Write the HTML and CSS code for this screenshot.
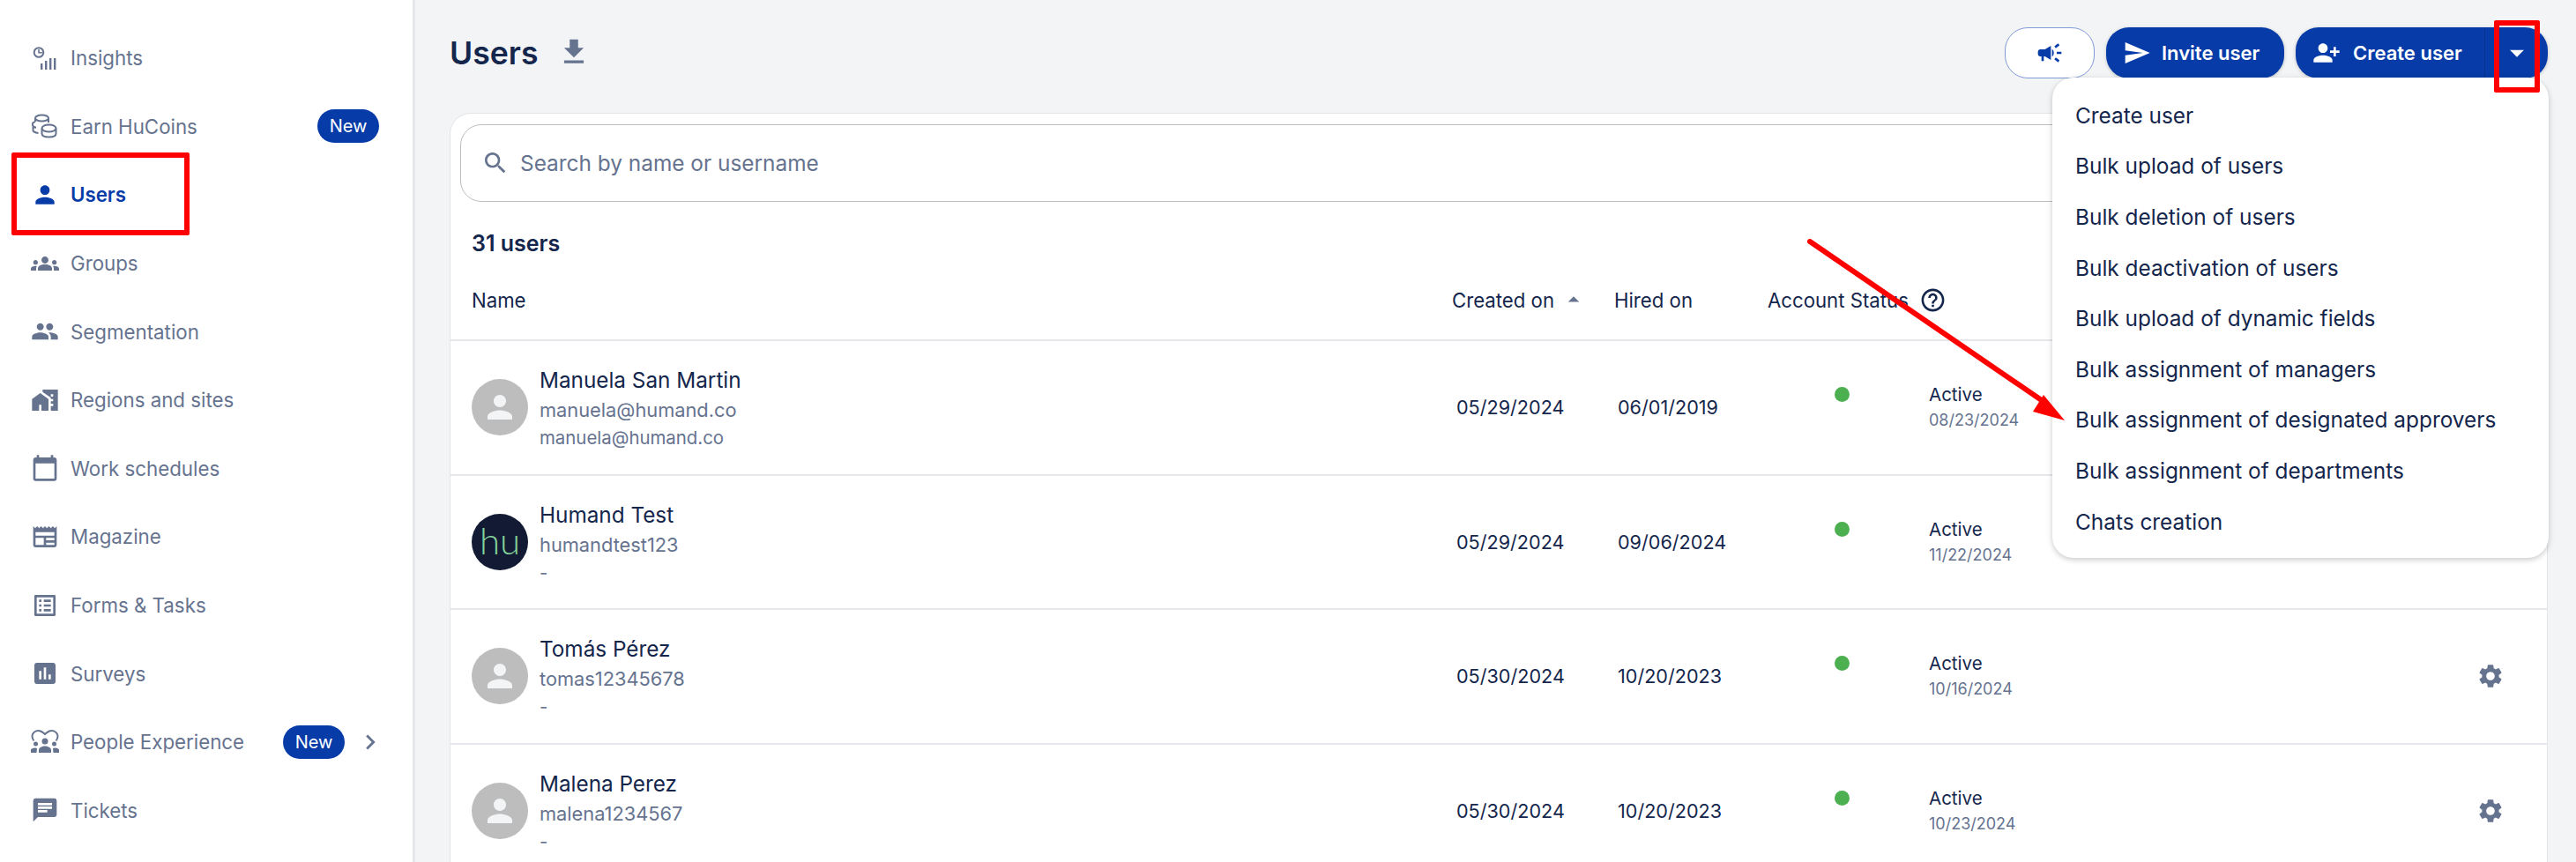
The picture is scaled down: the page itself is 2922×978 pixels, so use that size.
FILE: index.html
```html
<!DOCTYPE html>
<html>
    <head>
        <title>Users</title>
        <link rel="stylesheet" href="styles.css">
    </head>
    <body>
        <svg class="defs" width="0" height="0">
            <symbol id="person" viewBox="0 0 24 24"><path d="M12 12c2.21 0 4-1.79 4-4s-1.79-4-4-4-4 1.79-4 4 1.79 4 4 4zm0 2c-2.67 0-8 1.34-8 4v2h16v-2c0-2.66-5.33-4-8-4z"/></symbol>
            <symbol id="gear" viewBox="0 0 24 24"><path d="M19.14 12.94c.04-.3.06-.61.06-.94 0-.32-.02-.64-.07-.94l2.03-1.58c.18-.14.23-.41.12-.61l-1.92-3.32c-.12-.22-.37-.29-.59-.22l-2.39.96c-.5-.38-1.03-.7-1.62-.94l-.36-2.54c-.04-.24-.24-.41-.48-.41h-3.84c-.24 0-.43.17-.47.41l-.36 2.54c-.59.24-1.13.57-1.62.94l-2.39-.96c-.22-.08-.47 0-.59.22L2.74 8.87c-.12.21-.08.47.12.61l2.03 1.58c-.05.3-.09.63-.09.94s.02.64.07.94l-2.03 1.58c-.18.14-.23.41-.12.61l1.92 3.32c.12.22.37.29.59.22l2.39-.96c.5.38 1.03.7 1.62.94l.36 2.54c.05.24.24.41.48.41h3.84c.24 0 .44-.17.47-.41l.36-2.54c.59-.24 1.13-.56 1.62-.94l2.39.96c.22.08.47 0 .59-.22l1.92-3.32c.12-.22.07-.47-.12-.61l-2.01-1.58zM12 15.6c-1.98 0-3.6-1.62-3.6-3.6s1.62-3.6 3.6-3.6 3.6 1.62 3.6 3.6-1.62 3.6-3.6 3.6z"/></symbol>
        </svg>

        <div class="app">
            <aside class="sidebar">
                <a class="navitem">
                    <svg class="icon" viewBox="0 0 32 32"><circle class="line" cx="9" cy="9.5" r="5.3"/><path d="M8.2 6h1.6v3h3v1.6H8.2z"/><rect x="11" y="22" width="2.4" height="7"/><rect x="16" y="19" width="2.4" height="10"/><rect x="21" y="16" width="2.4" height="13"/><rect x="26" y="16" width="2.4" height="13"/></svg>
                    <span>Insights</span>
                </a>
                <a class="navitem">
                    <svg class="icon" viewBox="0 0 32 32"><ellipse class="line" cx="12.5" cy="7" rx="7.5" ry="3.5"/><path class="line" d="M5 7v4M20 7v5M5 11c-2.5.5-3.5 2-3 4 .3 1.5 2 2.5 4 2.8M2.5 17v4c0 1 2 2.5 6 3"/><ellipse class="line" cx="20.5" cy="18.5" rx="8" ry="4"/><path class="line" d="M12.5 18.5v6c0 2.5 3.5 4 8 4s8-1.5 8-4v-6"/></svg>
                    <span>Earn HuCoins</span>
                    <span class="badge">New</span>
                </a>
                <a class="navitem active">
                    <svg class="icon" viewBox="0 0 24 24"><use href="#person"/></svg>
                    <span>Users</span>
                </a>
                <a class="navitem">
                    <svg class="icon" viewBox="0 0 24 24"><path d="M12 12.75c1.63 0 3.07.39 4.24.9 1.08.48 1.76 1.56 1.76 2.73V18H6v-1.61c0-1.18.68-2.26 1.76-2.73 1.17-.52 2.61-.91 4.24-.91zM4 13c1.1 0 2-.9 2-2s-.9-2-2-2-2 .9-2 2 .9 2 2 2zm1.13 1.1c-.37-.06-.74-.1-1.13-.1-.99 0-1.93.21-2.78.58C.48 14.9 0 15.62 0 16.43V18h4.5v-1.61c0-.83.23-1.61.63-2.29zM20 13c1.1 0 2-.9 2-2s-.9-2-2-2-2 .9-2 2 .9 2 2 2zm4 3.43c0-.81-.48-1.53-1.22-1.85-.85-.37-1.79-.58-2.78-.58-.39 0-.76.04-1.13.1.4.68.63 1.46.63 2.29V18H24v-1.57zM12 6c1.66 0 3 1.34 3 3s-1.34 3-3 3-3-1.34-3-3 1.34-3 3-3z"/></svg>
                    <span>Groups</span>
                </a>
                <a class="navitem">
                    <svg class="icon" viewBox="0 0 24 24"><path d="M16 11c1.66 0 2.99-1.34 2.99-3S17.66 5 16 5c-1.66 0-3 1.34-3 3s1.34 3 3 3zm-8 0c1.66 0 2.99-1.34 2.99-3S9.66 5 8 5C6.34 5 5 6.34 5 8s1.34 3 3 3zm0 2c-2.33 0-7 1.17-7 3.5V19h14v-2.5c0-2.33-4.67-3.5-7-3.5zm8 0c-.29 0-.62.02-.97.05 1.16.84 1.97 1.97 1.97 3.45V19h6v-2.5c0-2.33-4.67-3.5-7-3.5z"/></svg>
                    <span>Segmentation</span>
                </a>
                <a class="navitem">
                    <svg class="icon" viewBox="0 0 24 24"><path d="M1 11v10h6v-5h2v5h6V11L8 6z"/><path d="M10 3v1.97l7 5V11h2v2h-2v2h2v2h-2v4h6V3H10zm9 6h-2V7h2v2z"/></svg>
                    <span>Regions and sites</span>
                </a>
                <a class="navitem">
                    <svg class="icon" viewBox="0 0 24 24"><path d="M20 3h-1V1h-2v2H7V1H5v2H4c-1.1 0-2 .9-2 2v16c0 1.1.9 2 2 2h16c1.1 0 2-.9 2-2V5c0-1.1-.9-2-2-2zm0 18H4V8h16v13z"/></svg>
                    <span>Work schedules</span>
                </a>
                <a class="navitem">
                    <svg class="icon" viewBox="0 0 24 24"><path d="M22 3l-1.67 1.67L18.67 3 17 4.67 15.33 3l-1.66 1.67L12 3l-1.67 1.67L8.67 3 7 4.67 5.33 3 3.67 4.67 2 3v16c0 1.1.9 2 2 2h16c1.1 0 2-.9 2-2V3zM11 19H4v-6h7v6zm9 0h-7v-2h7v2zm0-4h-7v-2h7v2zm0-4H4V8h16v3z"/></svg>
                    <span>Magazine</span>
                </a>
                <a class="navitem">
                    <svg class="icon" viewBox="0 0 24 24"><path d="M19 5v14H5V5h14m1.1-2H3.9c-.5 0-.9.4-.9.9v16.2c0 .4.4.9.9.9h16.2c.4 0 .9-.5.9-.9V3.9c0-.5-.5-.9-.9-.9zM11 7h6v2h-6V7zm0 4h6v2h-6v-2zm0 4h6v2h-6zM7 7h2v2H7zm0 4h2v2H7zm0 4h2v2H7z"/></svg>
                    <span>Forms &amp; Tasks</span>
                </a>
                <a class="navitem">
                    <svg class="icon" viewBox="0 0 24 24"><path d="M19 3H5c-1.1 0-2 .9-2 2v14c0 1.1.9 2 2 2h14c1.1 0 2-.9 2-2V5c0-1.1-.9-2-2-2zM9 17H7v-7h2v7zm4 0h-2V7h2v10zm4 0h-2v-4h2v4z"/></svg>
                    <span>Surveys</span>
                </a>
                <a class="navitem">
                    <svg class="icon" viewBox="0 0 32 32"><path class="line" d="M3.5 14.5C1.5 12 1 9.5 2 7c1.5-3.5 6-5 9-3.5 2 1 4 2.5 5 3.5 1-1 3-2.5 5-3.5 3-1.5 7.5 0 9 3.5 1 2.5.5 5-1.5 7.5"/><circle cx="16" cy="15" r="3.5"/><circle cx="5.5" cy="18" r="2.5"/><circle cx="26.5" cy="18" r="2.5"/><path d="M9 28v-3c0-3 4-4.5 7-4.5s7 1.5 7 4.5v3zM0 28v-3c0-1.5 2-2.5 5-2.5l2 .5-.5 5zM32 28v-3c0-1.5-2-2.5-5-2.5l-2 .5.5 5z"/></svg>
                    <span>People Experience</span>
                    <span class="badge">New</span>
                    <svg class="chev" viewBox="0 0 24 24"><path d="M10 6L8.59 7.41 13.17 12l-4.58 4.59L10 18l6-6z"/></svg>
                </a>
                <a class="navitem">
                    <svg class="icon" viewBox="0 0 24 24"><path d="M20 2H4c-1.1 0-2 .9-2 2v18l4-4h14c1.1 0 2-.9 2-2V4c0-1.1-.9-2-2-2zM6 9h12v2H6V9zm8 5H6v-2h8v2zm4-6H6V6h12v2z"/></svg>
                    <span>Tickets</span>
                </a>
            </aside>

            <main class="main">
                <div class="topbar">
                    <h1 class="pagetitle">Users</h1>
                    <svg class="download" viewBox="0 0 24 24"><path d="M19 9h-4V3H9v6H5l7 7 7-7zM5 18v2h14v-2H5z"/></svg>
                    <div class="actions">
                        <button class="btn btn-outline">
                            <svg viewBox="0 0 24 24"><path d="M18 11v2h4v-2h-4zm-2 6.61c.96.71 2.21 1.65 3.2 2.39.4-.53.8-1.07 1.2-1.6-.99-.74-2.24-1.68-3.2-2.4-.4.54-.8 1.08-1.2 1.61zM20.4 5.6c-.4-.53-.8-1.07-1.2-1.6-.99.74-2.24 1.68-3.2 2.4.4.53.8 1.07 1.2 1.6.96-.72 2.21-1.65 3.2-2.4zM4 9c-1.1 0-2 .9-2 2v2c0 1.1.9 2 2 2h1v4h2v-4h1l5 3V6L8 9H4zm11.5 3c0-1.33-.58-2.53-1.5-3.35v6.69c.92-.81 1.5-2.01 1.5-3.34z"/></svg>
                        </button>
                        <button class="btn btn-invite">
                            <svg viewBox="0 0 24 24"><path d="M2.01 21L23 12 2.01 3 2 10l15 2-15 2z"/></svg>
                            Invite user
                        </button>
                        <div class="btn btn-create">
                            <div class="create-main">
                                <svg viewBox="0 0 24 24"><path d="M13 8c0-2.21-1.79-4-4-4S5 5.79 5 8s1.79 4 4 4 4-1.79 4-4zm2 2v2h3v3h2v-3h3v-2h-3V7h-2v3h-3zM1 18v2h16v-2c0-2.66-5.33-4-8-4s-8 1.34-8 4z"/></svg>
                                Create user
                            </div>
                            <div class="create-caret">
                                <svg viewBox="0 0 24 24"><path d="M7 10l5 5 5-5z"/></svg>
                            </div>
                        </div>
                    </div>
                </div>

                <section class="card">
                    <div class="search">
                        <svg viewBox="0 0 24 24"><path d="M15.5 14h-.79l-.28-.27C15.41 12.59 16 11.11 16 9.5 16 5.91 13.09 3 9.5 3S3 5.91 3 9.5 5.91 16 9.5 16c1.61 0 3.09-.59 4.23-1.57l.27.28v.79l5 4.99L20.49 19l-4.99-5zm-6 0C7.01 14 5 11.99 5 9.5S7.01 5 9.5 5 14 7.01 14 9.5 11.99 14 9.5 14z"/></svg>
                        <span>Search by name or username</span>
                    </div>
                    <div class="count">31 users</div>

                    <div class="row head">
                        <div>Name</div>
                        <div class="sortcell">Created on
                            <svg viewBox="0 0 24 24"><path d="M7 14l5-5 5 5z"/></svg>
                        </div>
                        <div>Hired on</div>
                        <div class="statuscell">Account Status
                            <svg viewBox="0 0 24 24"><path d="M11 18h2v-2h-2v2zm1-16C6.48 2 2 6.48 2 12s4.48 10 10 10 10-4.48 10-10S17.52 2 12 2zm0 18c-4.41 0-8-3.59-8-8s3.59-8 8-8 8 3.59 8 8-3.59 8-8 8zm0-14c-2.21 0-4 1.79-4 4h2c0-1.1.9-2 2-2s2 .9 2 2c0 2-3 1.75-3 5h2c0-2.25 3-2.5 3-5 0-2.21-1.79-4-4-4z"/></svg>
                        </div>
                    </div>

                    <div class="row">
                        <div class="user">
                            <div class="avatar"><svg viewBox="0 0 24 24"><use href="#person"/></svg></div>
                            <div class="userinfo">
                                <div class="name">Manuela San Martin</div>
                                <div class="sub">manuela@humand.co</div>
                                <div class="sub small">manuela@humand.co</div>
                            </div>
                        </div>
                        <div class="date created">05/29/2024</div>
                        <div class="date hired">06/01/2019</div>
                        <div class="dotcell"><span class="dot"></span></div>
                        <div class="state"><div class="statename">Active</div><div class="statedate">08/23/2024</div></div>
                        <div class="gearcell"><svg class="gear" viewBox="0 0 24 24"><use href="#gear"/></svg></div>
                    </div>

                    <div class="row">
                        <div class="user">
                            <div class="avatar logo">hu</div>
                            <div class="userinfo">
                                <div class="name">Humand Test</div>
                                <div class="sub">humandtest123</div>
                                <div class="sub small">-</div>
                            </div>
                        </div>
                        <div class="date created">05/29/2024</div>
                        <div class="date hired">09/06/2024</div>
                        <div class="dotcell"><span class="dot"></span></div>
                        <div class="state"><div class="statename">Active</div><div class="statedate">11/22/2024</div></div>
                        <div class="gearcell"><svg class="gear" viewBox="0 0 24 24"><use href="#gear"/></svg></div>
                    </div>

                    <div class="row">
                        <div class="user">
                            <div class="avatar"><svg viewBox="0 0 24 24"><use href="#person"/></svg></div>
                            <div class="userinfo">
                                <div class="name">Tomás Pérez</div>
                                <div class="sub">tomas12345678</div>
                                <div class="sub small">-</div>
                            </div>
                        </div>
                        <div class="date created">05/30/2024</div>
                        <div class="date hired">10/20/2023</div>
                        <div class="dotcell"><span class="dot"></span></div>
                        <div class="state"><div class="statename">Active</div><div class="statedate">10/16/2024</div></div>
                        <div class="gearcell"><svg class="gear" viewBox="0 0 24 24"><use href="#gear"/></svg></div>
                    </div>

                    <div class="row">
                        <div class="user">
                            <div class="avatar"><svg viewBox="0 0 24 24"><use href="#person"/></svg></div>
                            <div class="userinfo">
                                <div class="name">Malena Perez</div>
                                <div class="sub">malena1234567</div>
                                <div class="sub small">-</div>
                            </div>
                        </div>
                        <div class="date created">05/30/2024</div>
                        <div class="date hired">10/20/2023</div>
                        <div class="dotcell"><span class="dot"></span></div>
                        <div class="state"><div class="statename">Active</div><div class="statedate">10/23/2024</div></div>
                        <div class="gearcell"><svg class="gear" viewBox="0 0 24 24"><use href="#gear"/></svg></div>
                    </div>
                </section>
            </main>

            <div class="menu">
                <div class="menuitem">Create user</div>
                <div class="menuitem">Bulk upload of users</div>
                <div class="menuitem">Bulk deletion of users</div>
                <div class="menuitem">Bulk deactivation of users</div>
                <div class="menuitem">Bulk upload of dynamic fields</div>
                <div class="menuitem">Bulk assignment of managers</div>
                <div class="menuitem">Bulk assignment of designated approvers</div>
                <div class="menuitem">Bulk assignment of departments</div>
                <div class="menuitem">Chats creation</div>
            </div>

            <!-- red annotations on top of the screenshot -->
            <div class="mark mark-users"></div>
            <div class="mark mark-caret"></div>
            <svg class="arrow" viewBox="0 0 300 210">
                <line x1="3" y1="3" x2="270" y2="186" stroke="#ff0000" stroke-width="6" stroke-linecap="round"/>
                <polygon points="292,206 268,177 256,196" fill="#ff0000"/>
            </svg>
        </div>
    </body>
</html>
```
FILE: styles.css
```css
*{
    box-sizing: border-box;
}

html, body{
    margin: 0;
    padding: 0;
    height: 978px;
    overflow: hidden;
}

body{
    font-family: "Inter", "Liberation Sans", sans-serif;
    color: #14264c;
    background-color: #f3f4f6;
}

svg{
    fill: currentColor;
    flex-shrink: 0;
}

svg .line{
    fill: none;
    stroke: currentColor;
    stroke-width: 2;
}

.defs{
    position: absolute;
}

.app{
    display: flex;
    height: 978px;
    position: relative;
    overflow: hidden;
}

/* sidebar */
.sidebar{
    width: 471px;
    flex-shrink: 0;
    background-color: #fff;
    border-right: 3px solid #e5e7eb;
    padding: 27px 38px 0 35px;
}

.navitem{
    display: flex;
    align-items: center;
    height: 77.6px;
    color: #66738f;
    font-size: 22.3px;
}

.navitem .icon{
    width: 32px;
    height: 32px;
    margin-right: 13px;
}

.navitem.active{
    color: #063ba8;
    font-weight: 600;
}

.badge{
    margin-left: auto;
    width: 70px;
    height: 38px;
    border-radius: 19px;
    background-color: #063ba8;
    color: #fff;
    font-size: 20px;
    display: flex;
    justify-content: center;
    align-items: center;
}

.chev{
    width: 34px;
    height: 34px;
    margin-left: 12px;
    margin-right: -7px;
}

/* main */
.main{
    flex: 1;
    min-width: 0;
    padding: 31px 32px 0 39px;
}

.topbar{
    display: flex;
    align-items: center;
    height: 58px;
    margin-bottom: 39px;
}

.pagetitle{
    margin: 0;
    font-size: 35.6px;
    font-weight: 600;
}

.download{
    width: 38px;
    height: 38px;
    color: #66738f;
    margin-left: 22px;
    margin-top: -2px;
}

.actions{
    margin-left: auto;
    display: flex;
    gap: 13px;
}

.btn{
    height: 58px;
    border: none;
    border-radius: 26px;
    font-family: inherit;
    font-size: 22px;
    font-weight: 600;
    color: #fff;
    background-color: #063ba8;
    display: flex;
    align-items: center;
    padding: 0;
    box-shadow: 0 1px 4px rgba(0,0,0,0.2);
}

.btn svg{
    width: 32px;
    height: 32px;
}

.btn-outline{
    width: 102px;
    justify-content: center;
    background-color: #fff;
    color: #063ba8;
    border: 1px solid #7f9ad6;
    box-shadow: none;
}

.btn-invite{
    width: 202px;
    padding-left: 19px;
    gap: 12px;
}

.btn-create{
    width: 286px;
}

.create-main{
    width: 215px;
    height: 100%;
    display: flex;
    align-items: center;
    gap: 14px;
    padding-left: 19px;
    border-right: 1px solid #06338f;
}

.create-caret{
    flex: 1;
    display: flex;
    justify-content: center;
    align-items: center;
}

.create-caret svg{
    width: 38px;
    height: 38px;
}

/* users table */
.card{
    background-color: #fff;
    border: 1px solid #e3e5e9;
    border-radius: 24px;
    height: 1000px;
    padding-top: 12px;
}

.search{
    margin: 0 11px;
    height: 88px;
    border: 1px solid #bdbdbd;
    border-radius: 24px;
    display: flex;
    align-items: center;
    padding-left: 23px;
    gap: 12px;
    color: #66738f;
    font-size: 24.4px;
}

.search svg{
    width: 32px;
    height: 32px;
}

.count{
    margin: 32px 0 4px 24px;
    line-height: 30px;
    font-size: 25px;
    font-weight: 600;
}

.row{
    display: grid;
    grid-template-columns: 1112px 184px 174px 183px 1fr 100px;
    align-items: center;
    height: 152.6px;
    padding-left: 24px;
    border-bottom: 2px solid #e5e7eb;
}

.row.head{
    grid-template-columns: 1112px 184px 174px 1fr;
    height: 92px;
    font-size: 22.2px;
    font-weight: 400;
}

.sortcell, .statuscell{
    display: flex;
    align-items: center;
}

.sortcell svg{
    width: 30px;
    height: 30px;
    color: #66738f;
    margin-left: 7px;
}

.statuscell svg{
    width: 31px;
    height: 31px;
    margin-left: 12px;
}

.user{
    display: flex;
    align-items: center;
    gap: 13px;
}

.avatar{
    width: 64px;
    height: 64px;
    border-radius: 50%;
    background-color: #bdbdbd;
    color: #f3f4f6;
    display: flex;
    justify-content: center;
    align-items: center;
}

.avatar svg{
    width: 42px;
    height: 42px;
}

.avatar.logo{
    background-color: #121b33;
    color: #82d09a;
    font-family: "Lato", sans-serif;
    font-size: 42px;
    font-weight: 300;
    padding-bottom: 4px;
}

.userinfo{
    margin-top: 2px;
}

.name{
    font-size: 24.3px;
    line-height: 34px;
}

.sub{
    color: #66738f;
    font-size: 21.8px;
    line-height: 34px;
}

.sub.small{
    font-size: 20.4px;
    line-height: 30px;
}

.date{
    font-size: 21.6px;
}

.date.created{
    padding-left: 5px;
}

.date.hired{
    padding-left: 4px;
}

.dotcell{
    padding-right: 15px;
    display: flex;
    justify-content: center;
}

.dot{
    width: 17px;
    height: 17px;
    border-radius: 50%;
    background-color: #4caf50;
    margin-bottom: 29px;
}

.state{
    margin-top: 2px;
}

.statename{
    font-size: 20.5px;
    font-weight: 400;
    line-height: 28px;
}

.statedate{
    font-size: 18px;
    color: #66738f;
    line-height: 30px;
}

.gearcell{
    padding-right: 48px;
    display: flex;
    justify-content: flex-end;
}

.gear{
    width: 32px;
    height: 32px;
    color: #66738f;
}

/* dropdown */
.menu{
    position: absolute;
    left: 2328px;
    top: 88px;
    width: 563px;
    height: 545px;
    background-color: #fff;
    border-radius: 24px;
    padding-top: 14px;
    box-shadow: 0 2px 6px rgba(0,0,0,0.22);
}

.menuitem{
    height: 57.6px;
    padding-left: 26px;
    display: flex;
    align-items: center;
    font-size: 24.4px;
}

/* annotations */
.mark{
    position: absolute;
    border: 6px solid #ff0000;
    border-radius: 2px;
}

.mark-users{
    left: 13px;
    top: 173px;
    width: 202px;
    height: 94px;
}

.mark-caret{
    left: 2829px;
    top: 23px;
    width: 52px;
    height: 82px;
}

.arrow{
    position: absolute;
    left: 2050px;
    top: 271px;
    width: 300px;
    height: 210px;
}
```
